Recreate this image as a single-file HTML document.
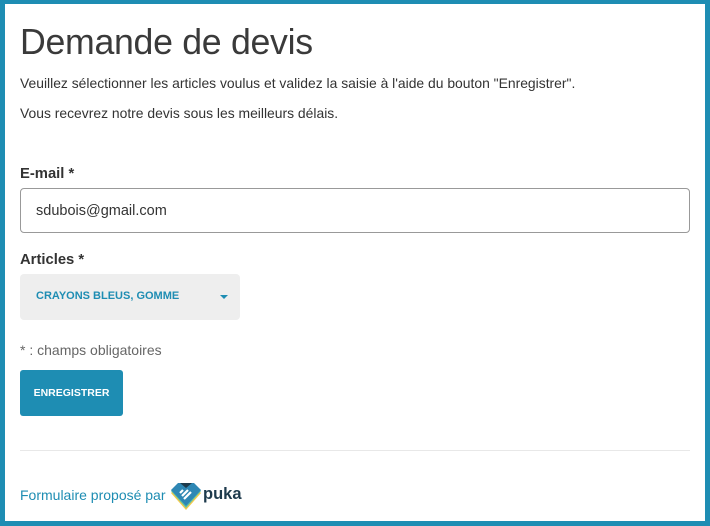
<!DOCTYPE html>
<html><head><meta charset="utf-8"><style>
html,body{margin:0;padding:0}
body{width:710px;height:526px;box-sizing:border-box;border:solid #1e8db3;border-width:4px 5px 5px 5px;background:#fff;font-family:"Liberation Sans",sans-serif;color:#333;position:relative;overflow:hidden}
.a{position:absolute}
h1{position:absolute;left:15px;top:18px;margin:0;font-size:35.7px;font-weight:normal;color:#3a3a3a;letter-spacing:-0.3px}
.p{font-size:13.9px;color:#333}
.lbl{font-size:14.8px;font-weight:bold;color:#333}
.inp{left:15px;top:184px;width:670px;height:45px;border:1px solid #999;border-radius:4px;box-sizing:border-box;font-size:14.5px;line-height:45px;padding-left:15px;color:#333}
.sel{left:15px;top:270px;width:220px;height:46px;background:#eee;border-radius:4px}
.sel span{position:absolute;left:16px;top:16px;font-size:11px;font-weight:bold;color:#1e8db3}
.btn{left:15px;top:366px;width:103px;height:46px;background:#1e8db3;border-radius:3px;color:#fff;font-size:10.5px;font-weight:bold;text-align:center;line-height:46px}
</style></head><body>
<h1>Demande de devis</h1>
<div class="a p" style="left:15px;top:71px">Veuillez sélectionner les articles voulus et validez la saisie à l'aide du bouton "Enregistrer".</div>
<div class="a p" style="left:15px;top:101px">Vous recevrez notre devis sous les meilleurs délais.</div>
<div class="a lbl" style="left:15px;top:162px">E-mail *</div>
<div class="a inp">sdubois@gmail.com</div>
<div class="a lbl" style="left:15px;top:248px">Articles *</div>
<div class="a sel"><span>CRAYONS BLEUS, GOMME</span>
<div class="a" style="left:200px;top:21px;width:0;height:0;border-left:4px solid transparent;border-right:4px solid transparent;border-top:4px solid #1e8db3"></div></div>
<div class="a" style="left:15px;top:338px;font-size:14px;color:#666">* : champs obligatoires</div>
<div class="a btn">ENREGISTRER</div>
<div class="a" style="left:15px;top:446px;width:670px;height:1px;background:#e8e8e8"></div>
<div class="a" style="left:15px;top:483px;font-size:14px;color:#1e8db3">Formulaire proposé par</div>
<svg class="a" style="left:165px;top:479px" width="32" height="28" viewBox="0 0 32 28">
<path d="M1 10 L8 3 L24 3 L31 10 L16 27 Z" fill="#f2c94c"/>
<path d="M1 8 L8 1 L24 1 L31 8 L16 25 Z" fill="#5bc0a6"/>
<path d="M1 7 L8 0 L24 0 L31 7 L16 23 Z" fill="#2e87b4"/>
<path d="M10 10 L13 7 M12 13 L18 7 M14 16 L21 9" stroke="#fff" stroke-width="2.2"/>
<path d="M10 0 L22 0 L16 5 Z" fill="#1d3a4c"/>
</svg>
<div class="a" style="left:198px;top:481px;font-size:16.5px;font-weight:bold;color:#1d3a4c">puka</div>
</body></html>
